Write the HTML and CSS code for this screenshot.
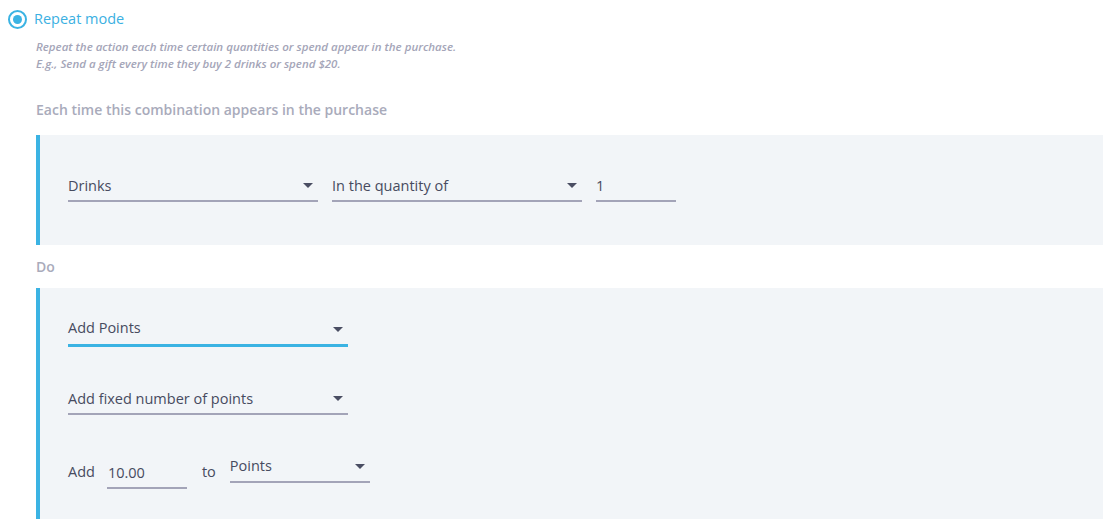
FILE: index.html
```html
<!DOCTYPE html>
<html>
<head>
<meta charset="utf-8">
<link rel="stylesheet" href="styles.css">
</head>
<body>
<div class="page">
  <div class="mode">
    <span class="radio"><span class="dot"></span></span>
    <span class="mode-title">Repeat mode</span>
  </div>
  <div class="desc">
    <div>Repeat the action each time certain quantities or spend appear in the purchase.</div>
    <div>E.g., Send a gift every time they buy 2 drinks or spend $20.</div>
  </div>
  <div class="label label-each">Each time this combination appears in the purchase</div>
  <div class="panel panel-cond">
    <div class="row">
      <div class="select w250"><span class="val">Drinks</span><span class="arrow"></span></div>
      <div class="select w250"><span class="val">In the quantity of</span><span class="arrow"></span></div>
      <div class="input w80"><span class="val">1</span></div>
    </div>
  </div>
  <div class="label label-do">Do</div>
  <div class="panel panel-do">
    <div class="select w280 active"><span class="val">Add Points</span><span class="arrow low"></span></div>
    <div class="select w280"><span class="val">Add fixed number of points</span><span class="arrow"></span></div>
    <div class="add-row">
      <span class="word">Add</span>
      <div class="input w80 shifted"><span class="val">10.00</span></div>
      <span class="word word-to">to</span>
      <div class="select w140"><span class="val">Points</span><span class="arrow"></span></div>
    </div>
  </div>
</div>
</body>
</html>
```
FILE: styles.css
```css
* { box-sizing: border-box; }
html, body { margin: 0; padding: 0; background: #ffffff; }
body { font-family: "Open Sans", "Liberation Sans", sans-serif; color: #4a4e63; }
.page { width: 1116px; height: 519px; overflow: hidden; }

.mode { display: flex; align-items: center; padding: 9px 0 0 8px; height: 29px; }
.radio { width: 19px; height: 19px; border: 2.5px solid #3bb3e3; border-radius: 50%; display: flex; align-items: center; justify-content: center; }
.dot { width: 9px; height: 9px; border-radius: 50%; background: #3bb3e3; }
.mode-title { margin-left: 7px; font-size: 14.5px; color: #3bb0e2; line-height: 20px; }

.desc { margin: 9px 0 0 36px; font-size: 11.5px; font-style: italic; font-weight: 600; color: #a4a5b8; line-height: 17px; }

.label { margin-left: 36px; font-size: 14px; font-weight: 600; color: #a9abbb; line-height: 20px; }
.label-each { margin-top: 28px; }
.label-do { margin-top: 12px; }

.panel { margin-left: 36px; width: 1067px; background: #f2f5f8; border-left: 4px solid #3bb3e3; padding-left: 28px; }
.panel-cond { margin-top: 15px; height: 110px; padding-top: 41px; }
.panel-do { margin-top: 11px; height: 240px; padding-top: 29px; display: flex; flex-direction: column; align-items: flex-start; gap: 42px; }

.row { display: flex; gap: 14px; align-items: flex-start; }

.select, .input { position: relative; display: flex; align-items: center; padding-bottom: 4px; border-bottom: 2px solid #a3a4b8; height: 26px; }
.select.active { border-bottom: 3px solid #3bb3e3; height: 30px; padding-bottom: 6px; }
.val { font-size: 14.5px; line-height: 20px; color: #474b5f; }
.arrow { position: absolute; right: 5px; top: 7px; width: 0; height: 0; border-left: 5px solid transparent; border-right: 5px solid transparent; border-top: 5px solid #4a4e63; }
.arrow.low { top: 10px; }

.w250 { width: 250px; }
.w280 { width: 280px; }
.w80 { width: 80px; }
.w140 { width: 140px; }

.add-row { display: flex; align-items: flex-start; }
.word { font-size: 14.5px; line-height: 20px; color: #474b5f; margin-top: 5px; }
.input.shifted { margin-left: 12px; margin-top: 6px; height: 26px; }
.input.shifted .val { margin-left: 1px; }
.word-to { margin-left: 15px; margin-right: 14px; }
.add-row .select .val { margin-top: -2px; }
```
